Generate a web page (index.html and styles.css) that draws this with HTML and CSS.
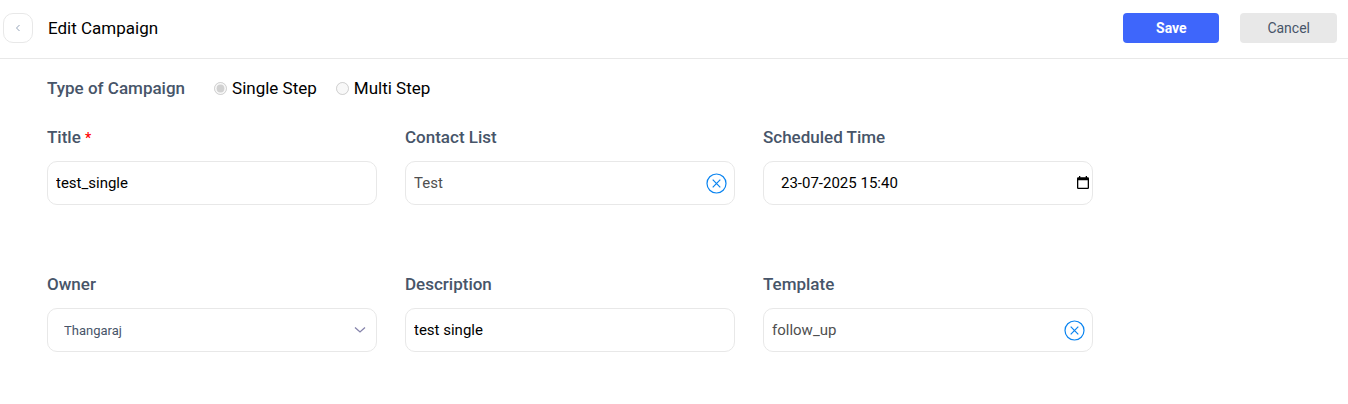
FILE: index.html
```html
<!DOCTYPE html>
<html lang="en">
<head>
    <meta charset="UTF-8">
    <meta name="viewport" content="width=device-width, initial-scale=1.0">
    <title>Edit Campaign</title>
    <link rel="stylesheet" href="styles.css">
</head>
<body>
    <header class="header">
        <button type="button" class="back-btn" aria-label="Back">
            <svg width="6" height="8" viewBox="0 0 6 8"><path d="M4.5 1 L1.5 4 L4.5 7" /></svg>
        </button>
        <h1>Edit Campaign</h1>
        <div class="actions">
            <button type="submit" form="campaignForm" class="btn btn-save">Save</button>
            <button type="button" class="btn btn-cancel">Cancel</button>
        </div>
    </header>

    <form id="campaignForm" class="form">
        <div class="type-row" role="radiogroup" aria-labelledby="typeLabel">
            <span class="label" id="typeLabel">Type of Campaign</span>
            <div class="options">
                <label class="option"><input type="radio" name="type" value="single" checked disabled>Single Step</label>
                <label class="option"><input type="radio" name="type" value="multi" disabled>Multi Step</label>
            </div>
        </div>

        <div class="grid">
            <div class="field">
                <label class="label" for="title">Title <span class="required">*</span></label>
                <div class="control">
                    <input type="text" id="title" name="title" value="test_single" required>
                </div>
            </div>

            <div class="field">
                <label class="label" for="contactList">Contact List</label>
                <div class="control">
                    <input type="text" class="lookup" id="contactList" name="contactList" value="Test">
                    <button type="button" class="icon-btn clear" aria-label="Clear contact list">
                        <svg width="21" height="21" viewBox="0 0 21 21"><circle cx="10.5" cy="10.5" r="9.5" /><path d="M6.7 6.7 L14.3 14.3 M14.3 6.7 L6.7 14.3" /></svg>
                    </button>
                </div>
            </div>

            <div class="field">
                <label class="label" for="scheduledTime">Scheduled Time</label>
                <div class="control">
                    <input type="text" class="indent" id="scheduledTime" name="scheduledTime" value="23-07-2025 15:40">
                    <button type="button" class="icon-btn calendar" aria-label="Pick a date">
                        <svg width="12" height="14" viewBox="0 0 12 14"><path class="fill" d="M1.2 1.2 H2 V0 H3.3 V1.2 H8.7 V0 H10 V1.2 H10.8 Q12 1.2 12 2.4 V11.8 Q12 13 10.8 13 H1.2 Q0 13 0 11.8 V2.4 Q0 1.2 1.2 1.2 Z M1.3 4.2 V11.7 H10.7 V4.2 Z" fill-rule="evenodd" /></svg>
                    </button>
                </div>
            </div>

            <div class="field">
                <label class="label" for="owner">Owner</label>
                <div class="control">
                    <select id="owner" name="owner">
                        <option>Thangaraj</option>
                    </select>
                    <svg class="chevron" width="12" height="8" viewBox="0 0 12 8"><path d="M1 1.5 L6 6 L11 1.5" /></svg>
                </div>
            </div>

            <div class="field">
                <label class="label" for="description">Description</label>
                <div class="control">
                    <input type="text" id="description" name="description" value="test single">
                </div>
            </div>

            <div class="field">
                <label class="label" for="template">Template</label>
                <div class="control">
                    <input type="text" class="lookup" id="template" name="template" value="follow_up">
                    <button type="button" class="icon-btn clear" aria-label="Clear template">
                        <svg width="21" height="21" viewBox="0 0 21 21"><circle cx="10.5" cy="10.5" r="9.5" /><path d="M6.7 6.7 L14.3 14.3 M14.3 6.7 L6.7 14.3" /></svg>
                    </button>
                </div>
            </div>
        </div>
    </form>
</body>
</html>
```
FILE: styles.css
```css
* {
    box-sizing: border-box;
}
body {
    margin: 0;
    font-family: Roboto, 'Liberation Sans', sans-serif;
    font-size: 17px;
    line-height: 24px;
    color: #000;
    background-color: #fff;
}
button, input, select {
    font-family: inherit;
}
svg {
    display: block;
    fill: none;
}
.header {
    display: flex;
    align-items: center;
    padding: 13px 11px 15px 3px;
    border-bottom: 1px solid #e8e8e8;
}
.back-btn {
    display: flex;
    justify-content: center;
    align-items: center;
    width: 30px;
    height: 30px;
    padding: 0;
    background-color: #fff;
    border: 1px solid #e8e8e8;
    border-radius: 10px;
    stroke: #94a3b8;
}
h1 {
    margin: 0 0 0 15px;
    font-size: 17px;
    font-weight: 400;
}
.actions {
    display: flex;
    gap: 21px;
    margin-left: auto;
}
.btn {
    min-width: 96px;
    height: 30px;
    padding: 0 16px;
    border: none;
    border-radius: 4px;
    font-size: 14px;
}
.btn-save {
    color: #fff;
    background-color: #3e66fb;
    font-weight: 700;
}
.btn-cancel {
    color: #475569;
    background-color: #e8e8e8;
    padding: 0 27px;
}
.form {
    max-width: 1093px;
    padding: 17px 0 48px 47px;
}
.label {
    color: #475569;
    font-weight: 500;
}
.required {
    color: #f00;
    font-size: 14px;
    line-height: 1;
}
.type-row {
    display: flex;
    gap: 29px;
    margin-bottom: 25px;
}
.options {
    display: flex;
    gap: 19px;
}
.option {
    display: flex;
    align-items: center;
    gap: 5px;
}
.option input {
    width: 13px;
    height: 13px;
    margin: 0;
}
.grid {
    display: grid;
    grid-template-columns: repeat(3, 1fr);
    gap: 67px 28px;
}
.field {
    display: flex;
    flex-direction: column;
    gap: 12px;
}
.control {
    display: flex;
    align-items: center;
    height: 44px;
    border: 1px solid #e8e8e8;
    border-radius: 10px;
}
.control input, .control select {
    flex: 1;
    min-width: 0;
    height: 100%;
    padding: 0 8px;
    border: none;
    outline: none;
    background: none;
    color: #000;
    font-size: 15px;
}
.control .lookup {
    color: #4f4f4f;
}
.control .indent {
    padding-left: 17px;
}
.control select {
    appearance: none;
    padding: 0 16px;
    color: #475569;
    font-size: 13px;
}
.icon-btn {
    padding: 0;
    border: none;
    background: none;
}
.clear {
    margin-right: 7px;
}
.clear svg {
    stroke: #0a84f0;
    stroke-width: 1.2;
}
.calendar {
    margin-right: 3px;
}
.fill {
    fill: #000;
}
.chevron {
    margin-right: 10px;
    stroke: #8583ab;
    stroke-width: 1.3;
    pointer-events: none;
}
```
